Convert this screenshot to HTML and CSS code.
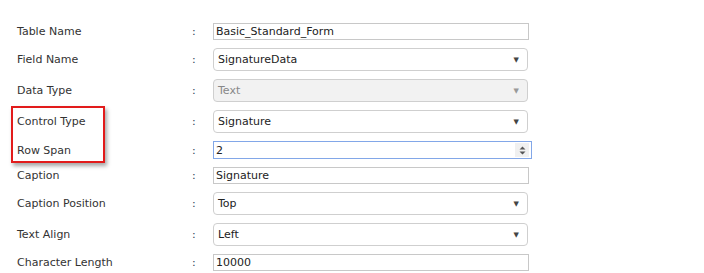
FILE: index.html
```html
<!DOCTYPE html>
<html>
<head>
<meta charset="utf-8">
<link rel="stylesheet" href="styles.css">
</head>
<body>
<div class="form">
  <div class="row r-input">
    <div class="label">Table Name</div><div class="colon">:</div>
    <div class="ctl"><div class="tinput">Basic_Standard_Form</div></div>
  </div>
  <div class="row r-select">
    <div class="label">Field Name</div><div class="colon">:</div>
    <div class="ctl"><div class="select"><span>SignatureData</span><span class="arrow">▼</span></div></div>
  </div>
  <div class="row r-select">
    <div class="label">Data Type</div><div class="colon">:</div>
    <div class="ctl"><div class="select disabled"><span>Text</span><span class="arrow">▼</span></div></div>
  </div>
  <div class="row r-select">
    <div class="label">Control Type</div><div class="colon">:</div>
    <div class="ctl"><div class="select"><span>Signature</span><span class="arrow">▼</span></div></div>
  </div>
  <div class="row r-number">
    <div class="label">Row Span</div><div class="colon">:</div>
    <div class="ctl"><div class="ninput"><span>2</span><span class="spin"><svg width="7" height="9" viewBox="0 0 7 9"><path d="M3.5 0.5 L6.5 3.5 L0.5 3.5 Z M0.5 5.5 L6.5 5.5 L3.5 8.5 Z" fill="#555"/></svg></span></div></div>
  </div>
  <div class="row r-input">
    <div class="label">Caption</div><div class="colon">:</div>
    <div class="ctl"><div class="tinput">Signature</div></div>
  </div>
  <div class="row r-select">
    <div class="label">Caption Position</div><div class="colon">:</div>
    <div class="ctl"><div class="select"><span>Top</span><span class="arrow">▼</span></div></div>
  </div>
  <div class="row r-select">
    <div class="label">Text Align</div><div class="colon">:</div>
    <div class="ctl"><div class="select"><span>Left</span><span class="arrow">▼</span></div></div>
  </div>
  <div class="row r-input">
    <div class="label">Character Length</div><div class="colon">:</div>
    <div class="ctl"><div class="tinput">10000</div></div>
  </div>
  <div class="highlight"></div>
</div>
</body>
</html>
```

FILE: styles.css
```css
html, body {
  margin: 0;
  padding: 0;
  background: #fff;
}
body {
  font-family: "DejaVu Sans", Verdana, sans-serif;
  font-size: 11px;
  color: #333;
}
.form {
  position: relative;
  padding: 23px 0 0 17px;
  display: flex;
  flex-direction: column;
  gap: 8px;
}
.row {
  display: grid;
  grid-template-columns: 175px 21px 1fr;
  align-items: center;
}
.label {
  color: #333;
}
.colon {
  color: #2b3a55;
  font-size: 11px;
}
.ctl {
  width: 317px;
}
.tinput {
  height: 15px;
  border: 1px solid #c8c8c8;
  line-height: 15px;
  padding-left: 2px;
  width: 312px;
  color: #222;
}
.select {
  height: 21px;
  border: 1px solid #cfcfcf;
  border-radius: 4px;
  width: 309px;
  display: flex;
  align-items: center;
  justify-content: space-between;
  padding: 0 0 0 4px;
  color: #222;
  box-sizing: content-box;
}
.select .arrow {
  font-size: 7px;
  color: #444;
  margin-right: 8px;
}
.select.disabled {
  background: #f2f2f2;
  color: #888;
}
.select.disabled .arrow {
  color: #999;
}
.ninput {
  height: 16px;
  width: 315px;
  border: 1px solid #82a7e8;
  display: flex;
  align-items: center;
  justify-content: space-between;
  padding-left: 2px;
  color: #222;
}
.spin {
  width: 14px;
  height: 14px;
  background: #f0f0f0;
  display: flex;
  align-items: center;
  justify-content: center;
  margin-right: 2px;
}
.highlight {
  position: absolute;
  left: 11px;
  top: 106px;
  width: 90px;
  height: 53px;
  border: 2px solid #e21b1b;
  box-shadow: 2px 3px 4px rgba(0,0,0,0.35);
}
```
